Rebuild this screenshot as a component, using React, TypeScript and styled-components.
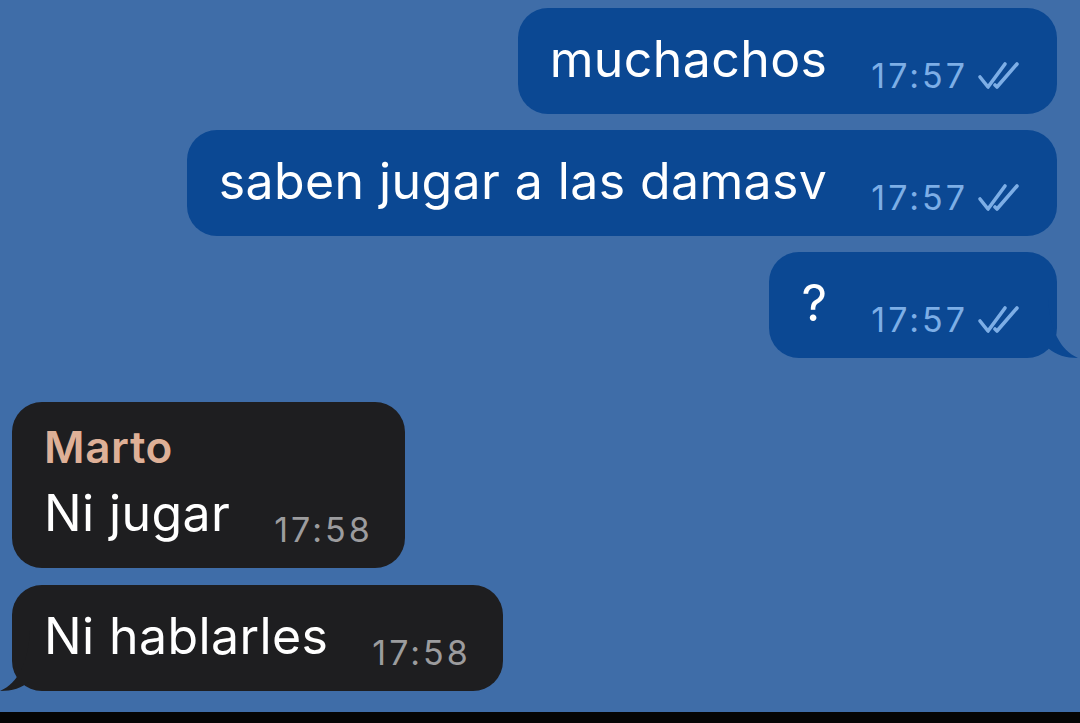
import React from 'react';
import styled, { createGlobalStyle } from 'styled-components';

const GlobalStyle = createGlobalStyle`
  html, body {
    margin: 0;
    padding: 0;
    background: #000;
  }
  body {
    font-family: Inter, 'Liberation Sans', sans-serif;
  }
`;

const Screen = styled.div`
  width: 1080px;
  height: 723px;
  display: flex;
  flex-direction: column;
  overflow: hidden;
`;

const Chat = styled.div`
  height: 712px;
  background: #3f6da8;
  padding: 8px 23px 0 12px;
  box-sizing: border-box;
  display: flex;
  flex-direction: column;
`;

const BottomBar = styled.div`
  flex: 1;
  background: #050505;
`;

const Group = styled.div<{ $gapTop?: number; $gap?: number }>`
  display: flex;
  flex-direction: column;
  gap: ${(p) => p.$gap ?? 16}px;
  margin-top: ${(p) => p.$gapTop ?? 0}px;
`;

const Row = styled.div<{ $out?: boolean }>`
  display: flex;
  justify-content: ${(p) => (p.$out ? 'flex-end' : 'flex-start')};
`;

const Bubble = styled.div<{ $out?: boolean }>`
  position: relative;
  background: ${(p) => (p.$out ? '#0b4893' : '#1e1e20')};
  border-radius: 30px;
  padding: 21px 32px 25px 32px;
  box-sizing: border-box;
  display: flex;
  flex-direction: column;
`;

const SenderName = styled.div`
  color: #deb097;
  font-size: 44px;
  font-weight: 600;
  line-height: 48px;
  letter-spacing: 0.6px;
  margin-bottom: 12px;
`;

const Line = styled.div`
  display: flex;
  align-items: flex-end;
`;

const Text = styled.span`
  color: #ffffff;
  font-size: 50px;
  line-height: 60px;
  letter-spacing: 0.4px;
`;

const Meta = styled.span<{ $out?: boolean }>`
  display: flex;
  align-items: center;
  gap: 9px;
  margin-left: 44px;
  margin-bottom: -7px;
  color: ${(p) => (p.$out ? '#7daee6' : '#9c9c9e')};
  font-size: 34px;
  line-height: 40px;
  letter-spacing: 3px;
`;

const Tail = styled.svg<{ $out?: boolean }>`
  position: absolute;
  bottom: 0;
  width: 30px;
  height: 60px;
  ${(p) => (p.$out ? 'right: -21px;' : 'left: -12px;')}
`;

function Checks() {
  return (
    <svg width="48" height="32" viewBox="0 0 48 32" fill="none" stroke="#7daee6" strokeWidth="3.6" strokeLinecap="round" strokeLinejoin="round">
      <path d="M3 17 L11 27 L28 4" />
      <path d="M18 25 L20 27 L40 4" />
    </svg>
  );
}

function OutTail() {
  return (
    <Tail $out viewBox="0 0 30 60">
      <path d="M0 0 C 2 32, 12 52, 30 60 C 18 60, 8 57, 0 50 Z" fill="#0b4893" />
    </Tail>
  );
}

function InTail() {
  return (
    <Tail viewBox="0 0 30 60">
      <path d="M30 0 C 28 32, 18 52, 0 60 C 12 60, 22 57, 30 50 Z" fill="#1e1e20" />
    </Tail>
  );
}

interface Msg {
  text: string;
  time: string;
}

const outgoing: Msg[] = [
  { text: 'muchachos', time: '17:57' },
  { text: 'saben jugar a las damasv', time: '17:57' },
  { text: '?', time: '17:57' },
];

export default function App() {
  return (
    <Screen>
      <GlobalStyle />
      <Chat>
        <Group>
          {outgoing.map((m, i) => (
            <Row $out key={i}>
              <Bubble $out>
                <Line>
                  <Text>{m.text}</Text>
                  <Meta $out>
                    {m.time}
                    <Checks />
                  </Meta>
                </Line>
                {i === outgoing.length - 1 && <OutTail />}
              </Bubble>
            </Row>
          ))}
        </Group>
        <Group $gapTop={44} $gap={17}>
          <Row>
            <Bubble>
              <SenderName>Marto</SenderName>
              <Line>
                <Text>Ni jugar</Text>
                <Meta>17:58</Meta>
              </Line>
            </Bubble>
          </Row>
          <Row>
            <Bubble>
              <Line>
                <Text>Ni hablarles</Text>
                <Meta>17:58</Meta>
              </Line>
              <InTail />
            </Bubble>
          </Row>
        </Group>
      </Chat>
      <BottomBar />
    </Screen>
  );
}
